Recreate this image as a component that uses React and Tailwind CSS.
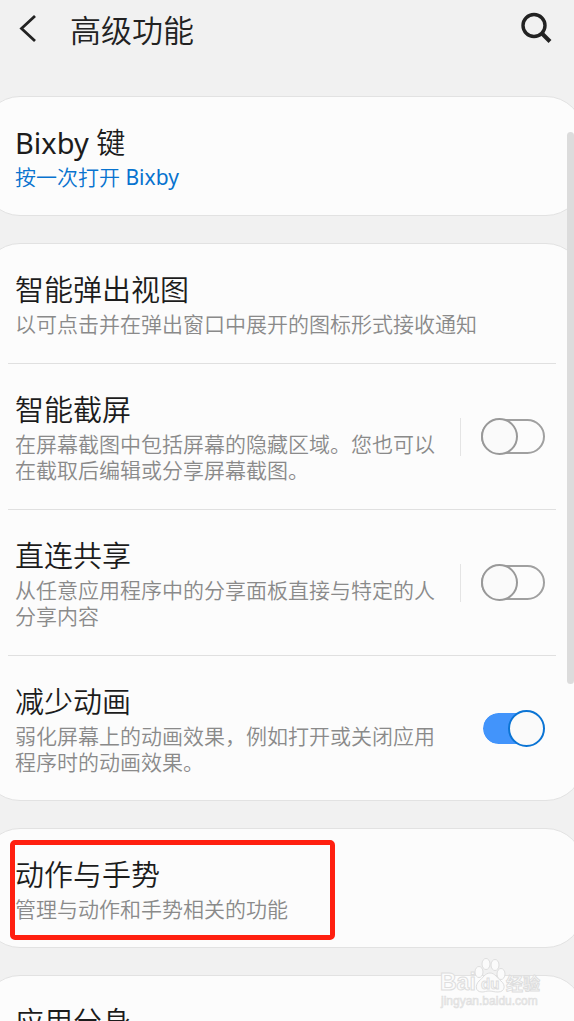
import React, { useId, useState } from "react";

function Row({ title, note, accent, toggle, split, defaultOn }) {
  const id = useId();
  const [on, setOn] = useState(Boolean(defaultOn));
  return (
    <div className="flex items-center pt-[26px] pr-7 pb-[25px] pl-[7px]">
      <div className="min-w-0 flex-1 pr-5">
        <h2 className="mb-px text-[29px] leading-10 text-[#1c1c1c]">
          {toggle ? <label htmlFor={id}>{title}</label> : title}
        </h2>
        {note && (
          <p className={accent ? "text-[21px] leading-[26px] text-[#0873cf]" : "text-[21px] leading-[26px] text-[#8a8a8a]"}>
            {note}
          </p>
        )}
      </div>
      {toggle && (
        <div className={split ? "flex h-[38px] items-center border-l border-[#e4e4e4] pl-5" : "flex h-[38px] items-center border-l border-transparent pl-5"}>
          <input
            id={id}
            type="checkbox"
            role="switch"
            checked={on}
            onChange={(e) => setOn(e.target.checked)}
            className="flex h-[35px] w-16 shrink-0 appearance-none items-center rounded-full border-2 border-[#a0a0a0] bg-[#fcfcfc] before:-ml-0.5 before:size-[37px] before:shrink-0 before:rounded-full before:border-2 before:border-[#999999] before:bg-[#fafafa] before:content-[''] checked:justify-end checked:border-[#fcfcfc] checked:bg-[#4294fb] checked:bg-clip-padding checked:before:-mr-0.5 checked:before:ml-0 checked:before:border-[#0b74d4]"
          />
        </div>
      )}
    </div>
  );
}

function Card({ children }) {
  return (
    <section className="relative -mr-2.5 -ml-[18px] rounded-[38px] border border-[#e2e2e2] bg-[#fcfcfc] pr-2.5 pl-[25px]">
      {children}
    </section>
  );
}

function Divider() {
  return <hr className="mt-px mr-[17px] border-t border-[#e0e0e0]" />;
}

function Bixby() {
  return <span className="font-normal">Bixby</span>;
}

function Watermark() {
  return (
    <svg
      aria-hidden="true"
      className="pointer-events-none absolute right-7 bottom-2 h-[56px] w-[108px]"
      viewBox="0 0 108 56"
      fill="#fbfbfb"
      stroke="#dedede"
      strokeWidth="1"
      fontFamily="'Liberation Sans', 'Noto Sans CJK SC', sans-serif"
      fontWeight="bold"
    >
      <text x="2" y="33" fontSize="23">Bai</text>
      <ellipse cx="41" cy="15" rx="4" ry="5.5" />
      <ellipse cx="48" cy="7" rx="4" ry="5.5" />
      <ellipse cx="57" cy="8" rx="4" ry="5.5" />
      <ellipse cx="63" cy="17" rx="4" ry="5.5" />
      <path d="M52 16C57 16 59 21 63 24C68 28 67 35 60 35C56 35 54 34 51 34C48 34 47 35 44 35C37 35 37 28 41 24C45 21 47 16 52 16Z" />
      <text x="43" y="32" fontSize="15">du</text>
      <text x="68" y="33" fontSize="17">经验</text>
      <text x="3" y="48" fontSize="12" fontWeight="normal" strokeWidth="0.6" fill="#f0f0f0">jingyan.baidu.com</text>
    </svg>
  );
}

export default function App() {
  return (
    <div
      lang="zh-CN"
      className="relative h-screen overflow-hidden bg-[#f1f1f1] font-['Noto_Sans','Noto_Sans_CJK_SC',sans-serif] font-[350]"
    >
      <header className="flex h-24 items-start justify-between pt-2 pr-5 pl-4">
        <div className="flex items-center gap-[27px]">
          <button type="button" aria-label="返回" className="flex h-10 w-[27px] items-center">
            <svg className="h-8 w-6" viewBox="0 0 24 32" fill="none" stroke="#222222" strokeWidth="2.8">
              <path d="M19 2L5.5 14.5L19 27" />
            </svg>
          </button>
          <h1 className="text-[31px] leading-[44px] text-[#222222]">高级功能</h1>
        </div>
        <button type="button" aria-label="搜索" className="flex h-10 items-center">
          <svg className="size-[34px]" viewBox="0 0 34 34" fill="none" stroke="#222222" strokeWidth="3.4">
            <circle cx="14" cy="14.5" r="11" />
            <path d="M22 22.5L30 30.5" strokeWidth="4" />
          </svg>
        </button>
      </header>

      <main className="flex flex-col gap-[27px]">
        <Card>
          <Row title={<><Bixby /> 键</>} note={<>按一次打开 <Bixby /></>} accent />
        </Card>
        <Card>
          <Row title="智能弹出视图" note="以可点击并在弹出窗口中展开的图标形式接收通知" />
          <Divider />
          <Row title="智能截屏" note="在屏幕截图中包括屏幕的隐藏区域。您也可以在截取后编辑或分享屏幕截图。" toggle split />
          <Divider />
          <Row title="直连共享" note="从任意应用程序中的分享面板直接与特定的人分享内容" toggle split />
          <Divider />
          <Row title="减少动画" note="弱化屏幕上的动画效果，例如打开或关闭应用程序时的动画效果。" toggle defaultOn />
        </Card>
        <Card>
          <Row title="动作与手势" note="管理与动作和手势相关的功能" />
          <div className="pointer-events-none absolute top-[11px] left-[27px] h-[100px] w-[325px] rounded-[5px] border-[5px] border-[#ff2010]" />
        </Card>
        <Card>
          <Row title="应用分身" />
        </Card>
      </main>

      <div className="pointer-events-none absolute top-[132px] right-0 h-[552px] w-[7px] rounded-full bg-[#dcdcdc]" />
      <Watermark />
    </div>
  );
}
